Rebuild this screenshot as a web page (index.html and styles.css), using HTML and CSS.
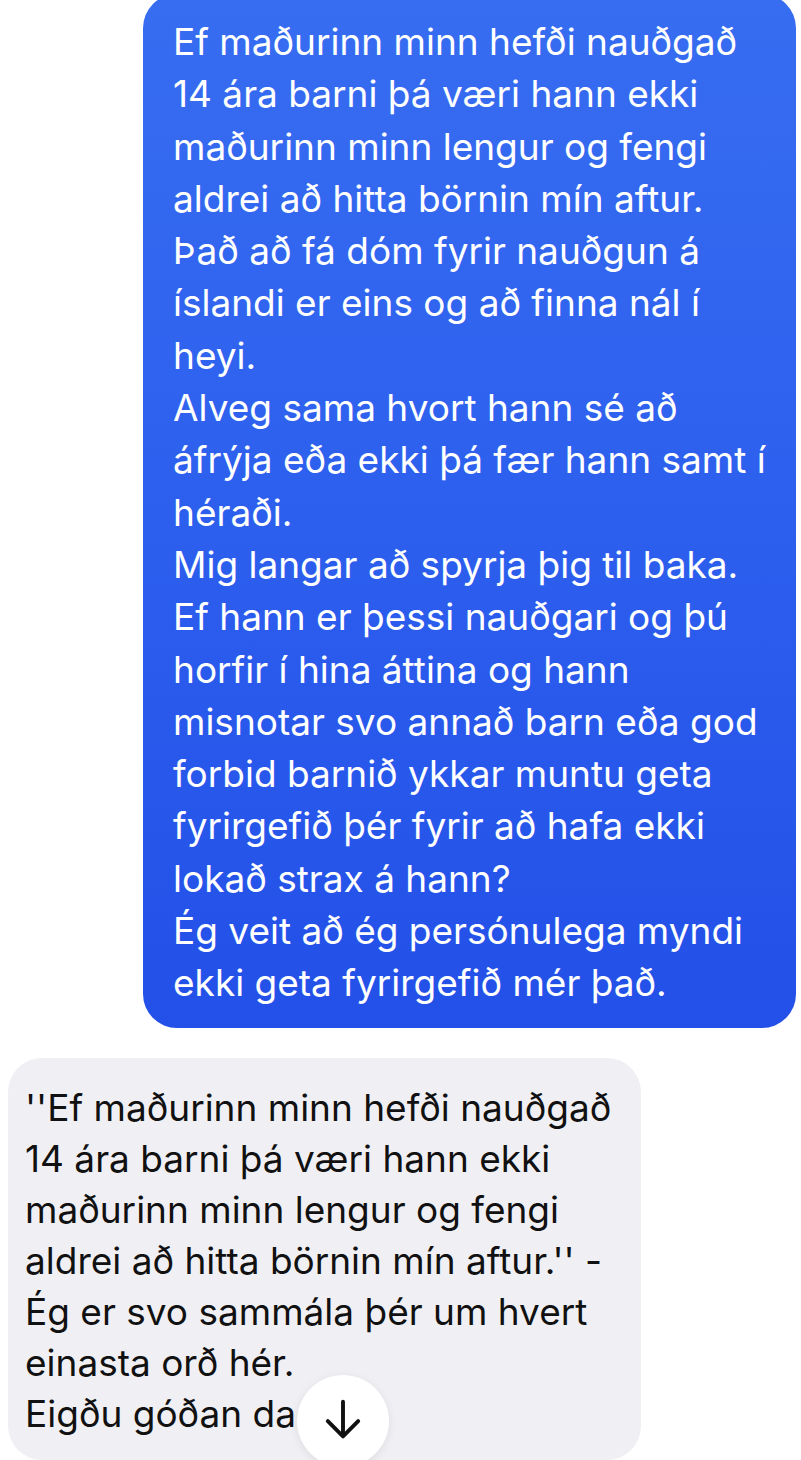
FILE: index.html
```html
<!DOCTYPE html>
<html lang="is">
<head>
<meta charset="UTF-8">
<title>Spjall</title>
<meta name="viewport" content="width=device-width, initial-scale=1.0">
<link rel="stylesheet" href="styles.css">
</head>
<body>

<div class="thread">
    <!-- sent message -->
    <div class="bubble sent">
        Ef maðurinn minn hefði nauðgað<br>
        14 ára barni þá væri hann ekki<br>
        maðurinn minn lengur og fengi<br>
        aldrei að hitta börnin mín aftur.<br>
        Það að fá dóm fyrir nauðgun á<br>
        íslandi er eins og að finna nál í<br>
        heyi.<br>
        Alveg sama hvort hann sé að<br>
        áfrýja eða ekki þá fær hann samt í<br>
        héraði.<br>
        Mig langar að spyrja þig til baka.<br>
        Ef hann er þessi nauðgari og þú<br>
        horfir í hina áttina og hann<br>
        misnotar svo annað barn eða god<br>
        forbid barnið ykkar muntu geta<br>
        fyrirgefið þér fyrir að hafa ekki<br>
        lokað strax á hann?<br>
        Ég veit að ég persónulega myndi<br>
        ekki geta fyrirgefið mér það.
    </div>

    <!-- received message -->
    <div class="bubble received">
        ''Ef maðurinn minn hefði nauðgað<br>
        14 ára barni þá væri hann ekki<br>
        maðurinn minn lengur og fengi<br>
        aldrei að hitta börnin mín aftur.'' -<br>
        Ég er svo sammála þér um hvert<br>
        einasta orð hér.<br>
        Eigðu góðan dag
    </div>

    <!-- scroll to bottom -->
    <button class="scroll-down" aria-label="Fara neðst">
        <svg viewBox="0 0 24 24" fill="none" stroke="currentColor" stroke-width="1.8" stroke-linecap="round" stroke-linejoin="round">
            <path d="M12 4v16M5 13l7 7 7-7"/>
        </svg>
    </button>
</div>

</body>
</html>
```

FILE: styles.css
```css
/* =====  PAGE  ===== */
*{box-sizing:border-box;margin:0;padding:0;}
body{
    background:#fff;
    font-family:"Inter","Roboto","Liberation Sans",sans-serif;
    overflow:hidden;
}

.thread{
    position:relative;
    display:flex;
    flex-direction:column;
    gap:30px;
    height:1460px;
}

/* =====  BUBBLES  ===== */
.bubble{
    font-size:37px;
    white-space:nowrap;
    border-radius:34px;
}
.sent{
    align-self:flex-end;
    width:653px;
    margin-top:-6px;
    margin-right:5px;
    padding:22px 0 18px 30px;
    line-height:52.3px;
    color:#fff;
    background:linear-gradient(180deg,#376df1 0%,#2d5fee 50%,#2350e8 100%);
}
.received{
    width:633px;
    margin-left:8px;
    padding:24px 0 21px 17px;
    line-height:51px;
    color:#111;
    background:#f0f0f4;
}

/* =====  SCROLL BUTTON  ===== */
.scroll-down{
    position:absolute;
    left:297px;
    top:1375px;
    width:92px;
    height:92px;
    border:none;
    border-radius:50%;
    background:#fff;
    color:#111;
    box-shadow:0 2px 10px rgba(0,0,0,.08);
    display:flex;
    align-items:center;
    justify-content:center;
}
.scroll-down svg{width:52px;height:52px;margin-top:-4px;}
```
